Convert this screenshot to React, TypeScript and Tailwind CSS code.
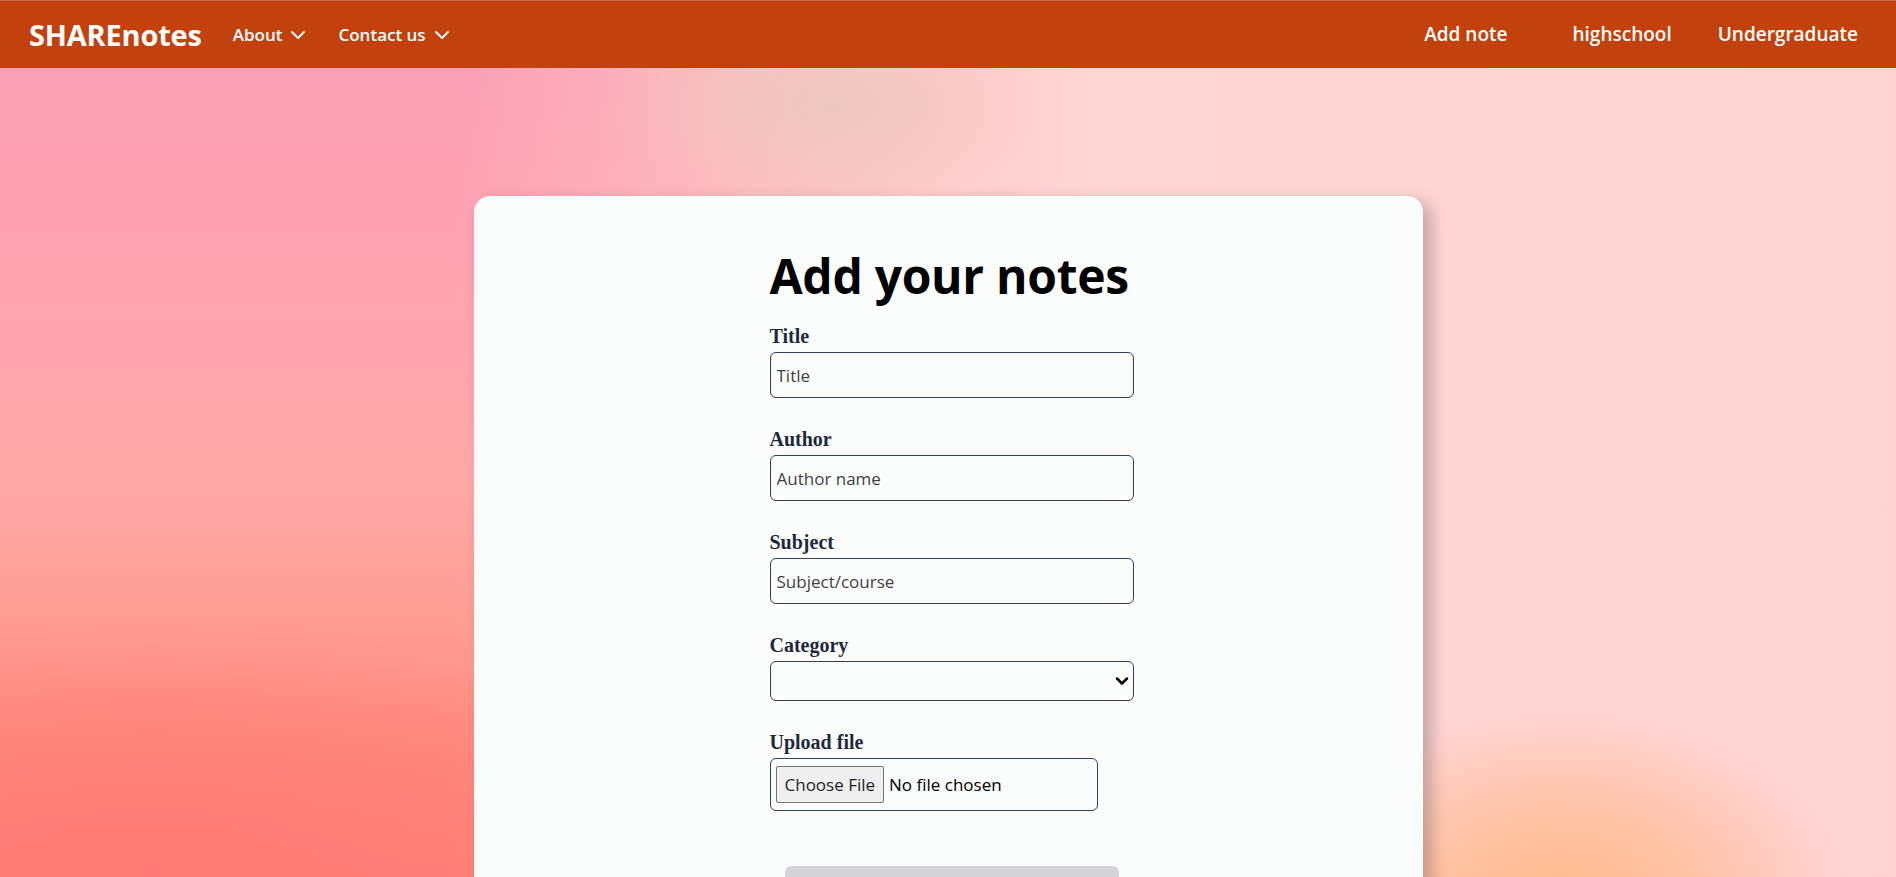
import { ChevronDown } from 'lucide-react';

function NavDrop({ label }: { label: string }) {
	return (
		<button className="flex items-center text-[17px] font-semibold text-white cursor-pointer">
			{label}
			<ChevronDown size={24} strokeWidth={2} className="ml-[4px]" />
		</button>
	);
}

function Field({ label, placeholder }: { label: string; placeholder: string }) {
	return (
		<div className="mb-[29px]">
			<label className="block mb-[4px] font-['Liberation_Serif',serif] font-bold text-[20px]/[24px] text-[#1e293b]">{label}</label>
			<input
				type="text"
				placeholder={placeholder}
				className="block w-[364px] h-[46px] px-[6px] border border-[#334155] rounded-md bg-transparent text-[17px] text-[#1f2937] placeholder:text-[#3f3f46] outline-none"
			/>
		</div>
	);
}

export default function App() {
	return (
		<div className="h-screen overflow-hidden font-['Open_Sans',sans-serif] bg-[radial-gradient(ellipse_290px_200px_at_1560px_910px,#ffb888_0%,rgba(255,184,136,0.6)_50%,rgba(255,184,136,0)_100%),radial-gradient(ellipse_220px_110px_at_830px_105px,rgba(236,200,190,0.95)_0%,rgba(236,200,190,0)_100%),linear-gradient(to_right,rgba(255,213,213,0)_0%,rgba(255,213,213,0)_24%,rgba(255,208,205,0.85)_46%,#ffd6d6_58%,#ffd4d4_100%),radial-gradient(ellipse_560px_260px_at_150px_877px,#ff7b74_0%,rgba(255,123,116,0)_100%),linear-gradient(180deg,#f99db5_0%,#ffa3b0_35%,#ffa8a6_55%,#ff9c92_72%,#ff887d_88%,#ff8075_100%)]">
			<nav className="h-[68px] bg-[#c2410c] border-t border-[#cc6a46] flex items-center pl-[29px] pr-[38px] text-white">
				<span className="text-[29px] font-bold tracking-[-0.2px]">SHAREnotes</span>
				<div className="ml-[31px] flex items-center gap-[28px]">
					<NavDrop label="About" />
					<NavDrop label="Contact us" />
				</div>
				<div className="ml-auto flex items-center text-[19px] font-semibold">
					<a className="mr-[65px] cursor-pointer">Add note</a>
					<a className="mr-[46px] cursor-pointer">highschool</a>
					<a className="cursor-pointer">Undergraduate</a>
				</div>
			</nav>

			<div className="mt-[128px] mx-auto w-[949px] rounded-2xl bg-[#fbfdfc] shadow-[9px_6px_16px_rgba(60,40,40,0.28)] pt-[56px] pb-[40px] pl-[296px]">
				<h1 className="text-[48px] leading-none font-bold text-black mb-[24px] tracking-[-0.3px]">Add your notes</h1>

				<Field label="Title" placeholder="Title" />
				<Field label="Author" placeholder="Author name" />
				<Field label="Subject" placeholder="Subject/course" />

				<div className="mb-[29px]">
					<label className="block mb-[4px] font-['Liberation_Serif',serif] font-bold text-[20px]/[24px] text-[#1e293b]">Category</label>
					<div className="relative w-[364px]">
						<select className="appearance-none block w-full h-[40px] px-[6px] border border-[#334155] rounded-md bg-transparent text-[17px] outline-none">
							<option value=""></option>
							<option value="highschool">highschool</option>
							<option value="undergraduate">Undergraduate</option>
						</select>
						<ChevronDown size={20} strokeWidth={3} className="absolute right-[2px] top-1/2 -translate-y-1/2 text-black pointer-events-none" />
					</div>
				</div>

				<div>
					<label className="block mb-[4px] font-['Liberation_Serif',serif] font-bold text-[20px]/[24px] text-[#1e293b]">Upload file</label>
					<div className="flex items-center w-[328px] h-[53px] px-[5px] border border-[#334155] rounded-md text-[17px]">
						<button className="h-[37px] px-[8px] bg-[#efefef] border border-[#767676] rounded-[2px] text-[#1f1f1f] cursor-pointer">Choose File</button>
						<span className="ml-[5px] text-black">No file chosen</span>
					</div>
				</div>

				<button aria-label="Submit" className="mt-[55px] ml-[15px] w-[334px] h-[44px] bg-[#d4d4d8] rounded-md" />
			</div>
		</div>
	);
}
